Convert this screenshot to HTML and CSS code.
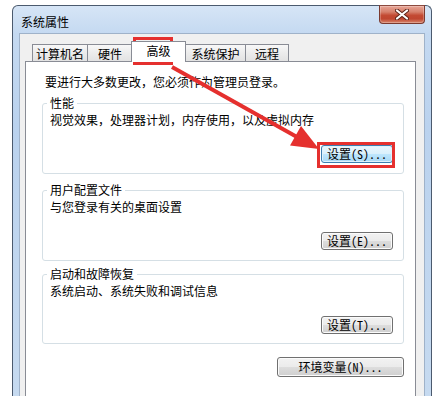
FILE: index.html
```html
<!DOCTYPE html>
<html lang="zh-CN">
<head>
<meta charset="utf-8">
<title>系统属性</title>
<link rel="stylesheet" href="styles.css">
</head>
<body>
<div class="window">
  <div class="titlebar">
    <span class="title">系统属性</span>
    <div class="close">
      <svg width="14" height="11" viewBox="0 0 14 11">
        <path d="M2 1.5 L12 9.5 M12 1.5 L2 9.5" stroke="#5a2218" stroke-width="4" stroke-linecap="round"/>
        <path d="M2 1.5 L12 9.5 M12 1.5 L2 9.5" stroke="#ffffff" stroke-width="2.2" stroke-linecap="round"/>
      </svg>
    </div>
  </div>
  <div class="client">
    <div class="tabs">
      <div class="tab t1">计算机名</div>
      <div class="tab t2">硬件</div>
      <div class="tab t3 active">高级</div>
      <div class="tab t4">系统保护</div>
      <div class="tab t5">远程</div>
    </div>
    <div class="panel">
      <p class="intro">要进行大多数更改，您必须作为管理员登录。</p>
      <div class="group g1">
        <div class="legend">性能</div>
        <div class="desc">视觉效果，处理器计划，内存使用，以及虚拟内存</div>
        <div class="actions"><button class="btn focus">设置(S)...</button></div>
      </div>
      <div class="group g2">
        <div class="legend">用户配置文件</div>
        <div class="desc">与您登录有关的桌面设置</div>
        <div class="actions"><button class="btn">设置(E)...</button></div>
      </div>
      <div class="group g3">
        <div class="legend">启动和故障恢复</div>
        <div class="desc">系统启动、系统失败和调试信息</div>
        <div class="actions"><button class="btn">设置(T)...</button></div>
      </div>
      <div class="actions env"><button class="btn wide">环境变量(N)...</button></div>
    </div>
  </div>
</div>
<svg class="annot" width="437" height="396" viewBox="0 0 437 396">
  <rect x="134.5" y="38.5" width="37" height="25" fill="none" stroke="#e5302e" stroke-width="3"/>
  <rect x="318.5" y="143.5" width="75" height="23" fill="none" stroke="#e5302e" stroke-width="3"/>
  <line x1="172" y1="67" x2="297" y2="137" stroke="#e5302e" stroke-width="4"/>
  <polygon points="319,149 290,145.5 301,126" fill="#e5302e"/>
</svg>
</body>
</html>
```

FILE: styles.css
```css
html, body {
  margin: 0;
  height: 100%;
  overflow: hidden;
  background: #ffffff;
}
body {
  font-family: "Noto Sans CJK SC", "Noto Sans", sans-serif;
  font-size: 12px;
  color: #000000;
  position: relative;
}
.window {
  margin: 5px 0 0 12px;
  width: 420px;
  height: 391px;
  box-sizing: border-box;
  border: 1px solid #4b5a6e;
  border-bottom: none;
  border-radius: 6px 6px 0 0;
  background: linear-gradient(180deg, #d6e5f6 0px, #c4d9f1 28px, #bad2ee 120px, #c6daf0 391px);
  padding: 0 6px;
  display: flex;
  flex-direction: column;
}
.titlebar {
  height: 27px;
  display: flex;
  align-items: flex-start;
  justify-content: space-between;
  flex: none;
}
.title {
  margin: 8px 0 0 2px;
  line-height: 16px;
}
.close {
  margin-top: -1px;
  width: 46px;
  height: 19px;
  box-sizing: border-box;
  border: 1px solid #7b3a2f;
  border-top-color: #8b4a3f;
  border-radius: 0 0 4px 4px;
  background: linear-gradient(180deg, #e8a596 0%, #d6806c 35%, #c34a33 55%, #bf4630 75%, #d8866c 100%);
  box-shadow: inset 0 0 0 1px rgba(255,255,255,0.25);
  display: flex;
  align-items: center;
  justify-content: center;
}
.client {
  flex: 1;
  min-height: 0;
  border: 1px solid #9fb2c9;
  border-bottom: none;
  background: #f0f0f0;
  padding: 7px 8px 0 5px;
  display: flex;
  flex-direction: column;
}
.tabs {
  display: flex;
  align-items: flex-end;
  height: 20px;
  padding-left: 7px;
  flex: none;
}
.tab {
  height: 17px;
  box-sizing: border-box;
  border: 1px solid #898c95;
  border-bottom: none;
  background: linear-gradient(180deg, #f8f8f8 0%, #ececec 50%, #e2e2e2 100%);
  display: flex;
  align-items: center;
  justify-content: center;
  line-height: 15px;
  margin-left: -1px;
}
.t1 { width: 56px; margin-left: 0; }
.t2 { width: 46px; }
.t3 { width: 55px; }
.t4 { width: 61px; }
.t5 { width: 44px; }
.tab.active {
  height: 21px;
  margin-left: -2px;
  margin-bottom: -1px;
  background: #ffffff;
  position: relative;
  z-index: 2;
  padding-bottom: 3px;
}
.panel {
  flex: 1;
  min-height: 0;
  background: #ffffff;
  border: 1px solid #898c95;
  border-bottom: none;
  padding: 12px 11px 0 16px;
}
.intro {
  margin: 0 0 0 3px;
  line-height: 16px;
}
.group {
  border: 1px solid #d5dfe5;
  border-radius: 3px;
  padding: 0 10px 10px 7px;
}
.g1 { margin-top: 13px; }
.g2 { margin-top: 16px; }
.g3 { margin-top: 13px; padding-bottom: 9px; }
.legend {
  margin: -9px 0 0 -3px;
  padding: 0 3px;
  background: #ffffff;
  width: fit-content;
  line-height: 16px;
}
.desc {
  margin-top: 1px;
  line-height: 16px;
}
.actions {
  display: flex;
  justify-content: flex-end;
  margin-top: 17px;
}
.actions.env { margin-top: 13px; }
.btn {
  width: 72px;
  height: 18px;
  padding: 0;
  margin: 0;
  border: 1px solid #707070;
  border-radius: 3px;
  background: linear-gradient(180deg, #f2f2f2 0%, #ebebeb 50%, #dddddd 51%, #cfcfcf 100%);
  box-shadow: inset 0 0 0 1px #fbfbfb;
  font-family: "Noto Sans CJK SC", sans-serif;
  font-size: 12px;
  line-height: 14px;
  color: #000000;
  font-feature-settings: "hwid";
}
.btn.focus {
  border-color: #3c7fb1;
  background: linear-gradient(180deg, #eaf6fd 0%, #d9f0fc 50%, #bee6fd 51%, #a7d9f5 100%);
  box-shadow: inset 0 0 0 1px #dff2fc;
}
.btn.wide {
  width: 127px;
  height: 20px;
}
.annot {
  position: absolute;
  left: 0;
  top: 0;
  pointer-events: none;
}
```
